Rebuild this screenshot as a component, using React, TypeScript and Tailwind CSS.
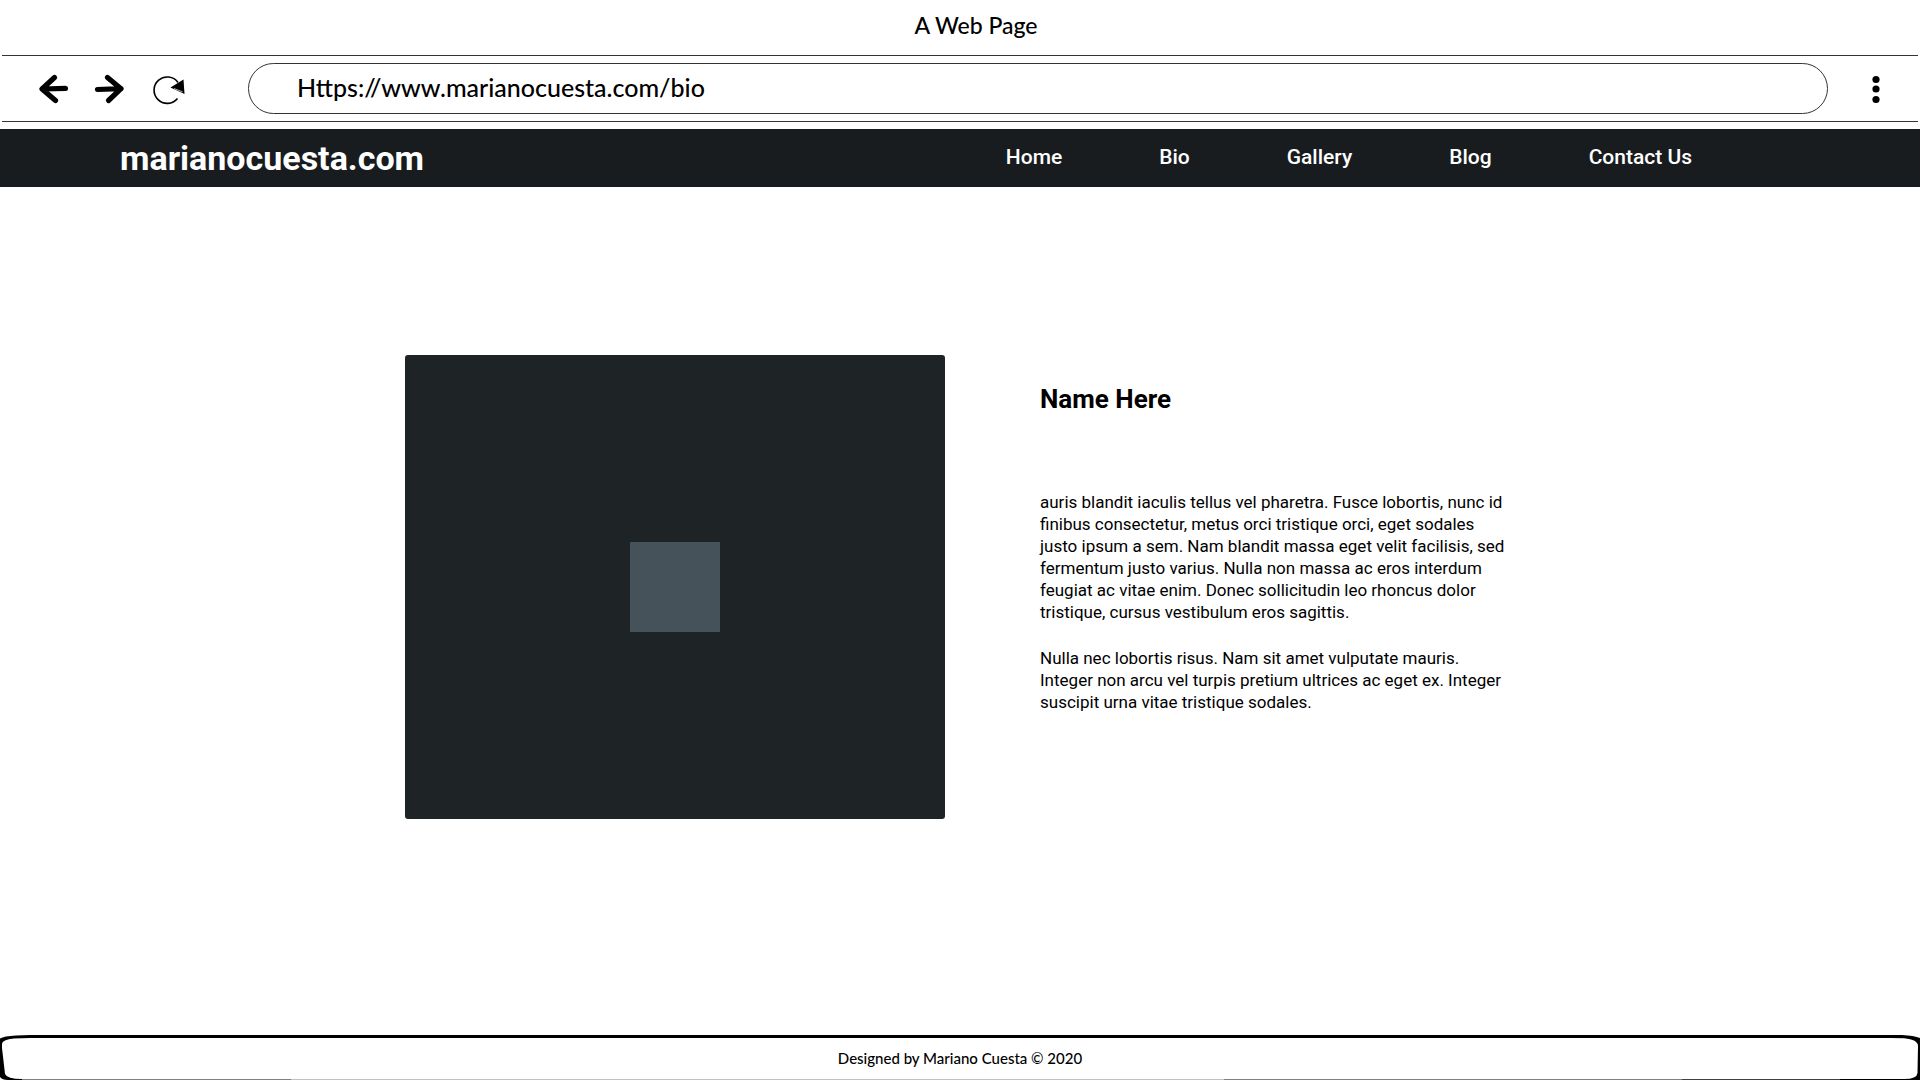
const links = ['Home', 'Bio', 'Gallery', 'Blog', 'Contact Us'];

const sketchFont = "font-['Lato','Open_Sans',sans-serif]";

function BrowserBar() {
  return (
    <header className={`${sketchFont} text-black`}>
      <div className="flex h-[55px] items-center justify-center pb-1 pl-8 text-[23px] font-medium">A Web Page</div>
      <div className="mx-0.5 flex h-[67px] items-center border-y border-[#333] pl-9 pr-[26px]">
        <div className="flex items-center gap-6">
          <button type="button" aria-label="Back" className="h-8 w-8">
            <svg viewBox="0 0 32 32" className="h-8 w-8" fill="none" stroke="black" strokeWidth="5.2" strokeLinecap="round" strokeLinejoin="round">
              <path d="M27.500 15.400L5 16M16.500 4.500L4 16L17.500 27.500" />
            </svg>
          </button>
          <button type="button" aria-label="Forward" className="h-8 w-8">
            <svg viewBox="0 0 32 32" className="h-8 w-8" fill="none" stroke="black" strokeWidth="5.2" strokeLinecap="round" strokeLinejoin="round">
              <path d="M3.500 16.500L27 15.700M13.500 4.500L27 15.700L14.500 27.500" />
            </svg>
          </button>
          <button type="button" aria-label="Reload" className="h-8 w-9">
            <svg viewBox="0 0 36 32" className="h-8 w-9" fill="none" stroke="black" strokeWidth="1.6">
              <path d="M28 9.500A13.200 13.200 0 1 0 27.500 25.500" />
              <path d="M20.500 14.500L33.500 6.500L34.500 21Z" fill="black" stroke="none" />
              <path d="M24 15.500L32.500 18.800" stroke="white" strokeWidth="0.7" />
            </svg>
          </button>
        </div>
        <input
          type="text"
          aria-label="Address"
          defaultValue="Https://www.marianocuesta.com/bio"
          className="ml-[62px] mr-8 h-[51px] min-w-0 flex-1 rounded-full border border-[#333] bg-white px-12 pb-1 text-[25px] font-medium outline-none"
        />
        <button type="button" aria-label="Menu" className="h-8 w-8">
          <svg viewBox="0 0 32 32" className="h-8 w-8">
            <circle cx="16" cy="6.500" r="3.6" />
            <circle cx="16" cy="16" r="3.6" />
            <circle cx="16" cy="26.500" r="3.6" />
          </svg>
        </button>
      </div>
    </header>
  );
}

function SiteNav() {
  return (
    <nav className="mt-[7px] flex h-[58px] items-center justify-between bg-[#181c1f] pl-[120px] pr-[228px] text-white">
      <a href="#home" className="text-[34px] font-bold leading-10">marianocuesta.com</a>
      <ul className="flex gap-[97px] text-[21px] font-medium">
        {links.map((label) => (
          <li key={label}>
            <a href={`#${label}`}>{label}</a>
          </li>
        ))}
      </ul>
    </nav>
  );
}

function Footer() {
  return (
    <footer className={`${sketchFont} flex h-[45px] text-black`}>
      <svg viewBox="0 0 80 45" className="h-full w-20 shrink-0">
        <path d="M80 0H30L16 0.500Q4 1 0 3.500V42Q2 45 8 45H22V44Q7 44 5 39L2 13V9Q2 4.500 14 3.500L30 3H80Z" />
        <path d="M22 44H80V45H22Z" fill="#808080" />
      </svg>
      <div className="flex flex-1 flex-col border-t-[3px] border-black">
        <p className="flex flex-1 items-center justify-center text-[15px] font-medium">
          Designed by Mariano Cuesta © 2020
        </p>
        <div className="flex h-px">
          <div className="w-[12%] bg-[#808080]" />
          <div className="w-[53%] bg-[#c0c0c0]" />
          <div className="w-[26%] bg-[#808080]" />
          <div className="w-[9%] bg-[#404040]" />
        </div>
      </div>
      <svg viewBox="0 0 80 45" className="h-full w-20 shrink-0">
        <path d="M0 0H62Q74 0.500 80 3V45H0V44H64Q77 44 77.500 38L78 11Q78 4.500 64 3.200L50 3H0Z" />
      </svg>
    </footer>
  );
}

export default function App() {
  return (
    <div className="flex min-h-screen flex-col bg-white font-['Roboto',sans-serif] text-black">
      <BrowserBar />
      <SiteNav />
      <main className="flex flex-1 items-start justify-center gap-[95px] px-6 pt-[168px]">
        <div className="flex h-[464px] w-[540px] items-center justify-center rounded-[3px] bg-[#1e2325]">
          <div className="h-[90px] w-[90px] bg-[#46525a]" />
        </div>
        <article className="w-[475px] pr-1.5 pt-7 text-[17px] leading-[22px]">
          <h1 className="mb-[76px] text-[26px] font-bold leading-8">Name Here</h1>
          <p className="mb-6">
            auris blandit iaculis tellus vel pharetra. Fusce lobortis, nunc id finibus consectetur, metus orci tristique orci, eget sodales justo ipsum a sem. Nam blandit massa eget velit facilisis, sed fermentum justo varius. Nulla non massa ac eros interdum feugiat ac vitae enim. Donec sollicitudin leo rhoncus dolor tristique, cursus vestibulum eros sagittis.
          </p>
          <p>
            Nulla nec lobortis risus. Nam sit amet vulputate mauris. Integer non arcu vel turpis pretium ultrices ac eget ex. Integer suscipit urna vitae tristique sodales.
          </p>
        </article>
      </main>
      <Footer />
    </div>
  );
}
